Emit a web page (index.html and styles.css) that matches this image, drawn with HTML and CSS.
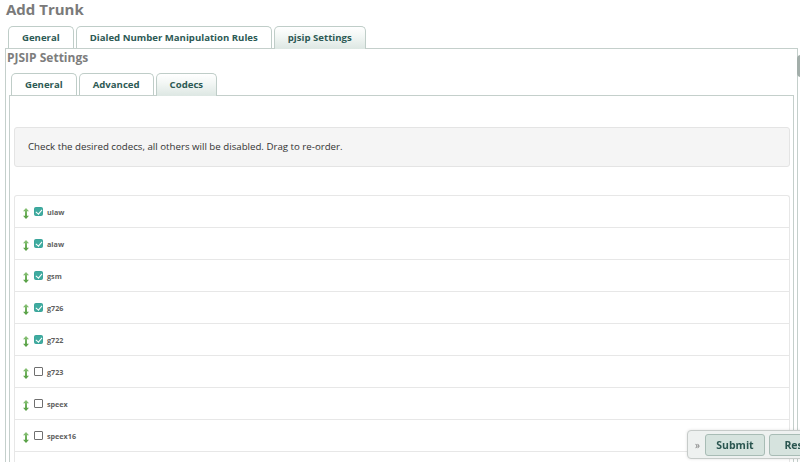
FILE: index.html
```html
<!DOCTYPE html>
<html>
<head>
<meta charset="utf-8">
<title>Add Trunk</title>
<link rel="stylesheet" href="styles.css">
</head>
<body>
<svg width="0" height="0" class="defs">
  <defs>
    <linearGradient id="dg" x1="0" y1="0" x2="0" y2="1">
      <stop offset="0" stop-color="#8cc47a"/>
      <stop offset="1" stop-color="#4f9a3c"/>
    </linearGradient>
    <symbol id="drag" viewBox="0 0 6 11">
      <path d="M3 0 L6 3.2 L4 3.2 L4 7.8 L6 7.8 L3 11 L0 7.8 L2 7.8 L2 3.2 L0 3.2 Z" fill="url(#dg)"/>
    </symbol>
  </defs>
</svg>

<h1 class="page-title">Add Trunk</h1>

<div class="tabs outer-tabs">
  <ul class="tab-nav">
    <li class="tab">General</li>
    <li class="tab">Dialed Number Manipulation Rules</li>
    <li class="tab active">pjsip Settings</li>
  </ul>
  <div class="tab-panel outer-panel">
    <h2 class="section-title">PJSIP Settings</h2>
    <div class="tabs inner-tabs">
      <ul class="tab-nav">
        <li class="tab">General</li>
        <li class="tab">Advanced</li>
        <li class="tab active">Codecs</li>
      </ul>
      <div class="tab-panel inner-panel">
        <div class="well">Check the desired codecs, all others will be disabled. Drag to re-order.</div>
        <ul class="codec-list">
          <li class="codec-row"><svg class="drag"><use href="#drag"/></svg><span class="cb checked"></span><span class="codec-name">ulaw</span></li>
          <li class="codec-row"><svg class="drag"><use href="#drag"/></svg><span class="cb checked"></span><span class="codec-name">alaw</span></li>
          <li class="codec-row"><svg class="drag"><use href="#drag"/></svg><span class="cb checked"></span><span class="codec-name">gsm</span></li>
          <li class="codec-row"><svg class="drag"><use href="#drag"/></svg><span class="cb checked"></span><span class="codec-name">g726</span></li>
          <li class="codec-row"><svg class="drag"><use href="#drag"/></svg><span class="cb checked"></span><span class="codec-name">g722</span></li>
          <li class="codec-row"><svg class="drag"><use href="#drag"/></svg><span class="cb"></span><span class="codec-name">g723</span></li>
          <li class="codec-row"><svg class="drag"><use href="#drag"/></svg><span class="cb"></span><span class="codec-name">speex</span></li>
          <li class="codec-row"><svg class="drag"><use href="#drag"/></svg><span class="cb"></span><span class="codec-name">speex16</span></li>
          <li class="codec-row codec-row-last"><svg class="drag"><use href="#drag"/></svg><span class="cb"></span></li>
        </ul>
      </div>
    </div>
  </div>
</div>

<div class="side-handle"></div>

<div class="action-bar">
  <span class="bar-toggle">»</span>
  <button class="btn btn-submit">Submit</button>
  <button class="btn btn-reset">Reset</button>
</div>
</body>
</html>
```

FILE: styles.css
```css
* { box-sizing: border-box; }
html, body { margin: 0; padding: 0; }
body {
  width: 800px;
  height: 462px;
  overflow: hidden;
  position: relative;
  background: #fff;
  font-family: "Open Sans", "DejaVu Sans", sans-serif;
}
.defs { position: absolute; }

.page-title {
  margin: 0;
  padding-left: 6px;
  font-size: 15px;
  line-height: 18px;
  font-weight: 700;
  color: #7a7a7a;
}

.outer-tabs { margin: 8px 2px 0 5px; }
.inner-tabs { margin: 7px 3px 0 3px; }

.tab-nav {
  list-style: none;
  margin: 0;
  padding: 0 0 0 2px;
  display: flex;
  align-items: flex-start;
  gap: 2px;
}
.outer-tabs > .tab-nav { padding-left: 3px; }

.tab {
  height: 22px;
  padding: 0 13px;
  border: 1px solid #bfcdc8;
  border-bottom: 0;
  border-radius: 5px 5px 0 0;
  font-size: 9.6px;
  font-weight: 700;
  line-height: 21px;
  color: #2d5a55;
  background: #fff;
  white-space: nowrap;
}
.tab.active {
  height: 23px;
  margin-bottom: -1px;
  position: relative;
  z-index: 1;
  background: linear-gradient(#ffffff 0%, #f3f7f5 40%, #dde7e3 100%);
}

.tab-panel {
  border: 1px solid #c4cfcb;
}

.section-title {
  margin: 1px 0 0 1px;
  font-size: 12px;
  line-height: 16px;
  font-weight: 700;
  color: #7d7d7d;
}

.inner-panel {
  padding: 31px 3px 0 4px;
  height: 380px;
}

.well {
  height: 40px;
  padding: 0 13px;
  border: 1px solid #e4e4e4;
  border-radius: 3px;
  background: #f5f5f5;
  font-size: 9.7px;
  line-height: 38px;
  color: #333;
}

.codec-list {
  list-style: none;
  margin: 28px 0 0;
  padding: 0;
  border: 1px solid #e7e7e7;
  border-bottom: 0;
  border-radius: 3px 3px 0 0;
}
.codec-row {
  height: 32px;
  padding-left: 8px;
  border-bottom: 1px solid #e7e7e7;
  display: flex;
  align-items: center;
}
.drag {
  width: 6px;
  height: 11px;
  margin-top: 3px;
  flex: none;
}
.cb {
  width: 9px;
  height: 9px;
  margin-left: 5px;
  flex: none;
  border: 1px solid #6f6f6f;
  border-radius: 1px;
  background: #fff;
  position: relative;
}
.cb.checked {
  border-color: #3aa59b;
  background: #3fab9f;
  border-radius: 1.5px;
}
.cb.checked::after {
  content: "";
  position: absolute;
  left: 2px;
  top: 0px;
  width: 2.5px;
  height: 5px;
  border-right: 1.3px solid #fff;
  border-bottom: 1.3px solid #fff;
  transform: rotate(40deg);
}
.codec-name {
  margin-left: 4px;
  font-size: 7.2px;
  font-weight: 700;
  color: #5f5f5f;
}

.side-handle {
  position: absolute;
  left: 797px;
  top: 55px;
  width: 8px;
  height: 22px;
  border-radius: 4px;
  background: #a3aeaa;
}

.action-bar {
  position: fixed;
  left: 687px;
  top: 430px;
  width: 150px;
  height: 29px;
  padding-left: 7px;
  display: flex;
  align-items: center;
  gap: 4px;
  border: 1px solid #c6cbc9;
  border-radius: 4px;
  background: #eef1f0;
  box-shadow: 0 0 3px rgba(0,0,0,0.12);
}
.bar-toggle {
  flex: none;
  font-size: 10px;
  color: #777;
  margin-right: 1px;
  line-height: 1;
}
.btn {
  flex: none;
  height: 22px;
  padding: 0;
  border: 1px solid #a8bcb5;
  border-radius: 3px;
  background: #d6e3de;
  font-family: "Open Sans", "DejaVu Sans", sans-serif;
  font-size: 10.5px;
  font-weight: 700;
  color: #2b5650;
}
.btn-submit { width: 60px; }
.btn-reset { width: 60px; }
```
